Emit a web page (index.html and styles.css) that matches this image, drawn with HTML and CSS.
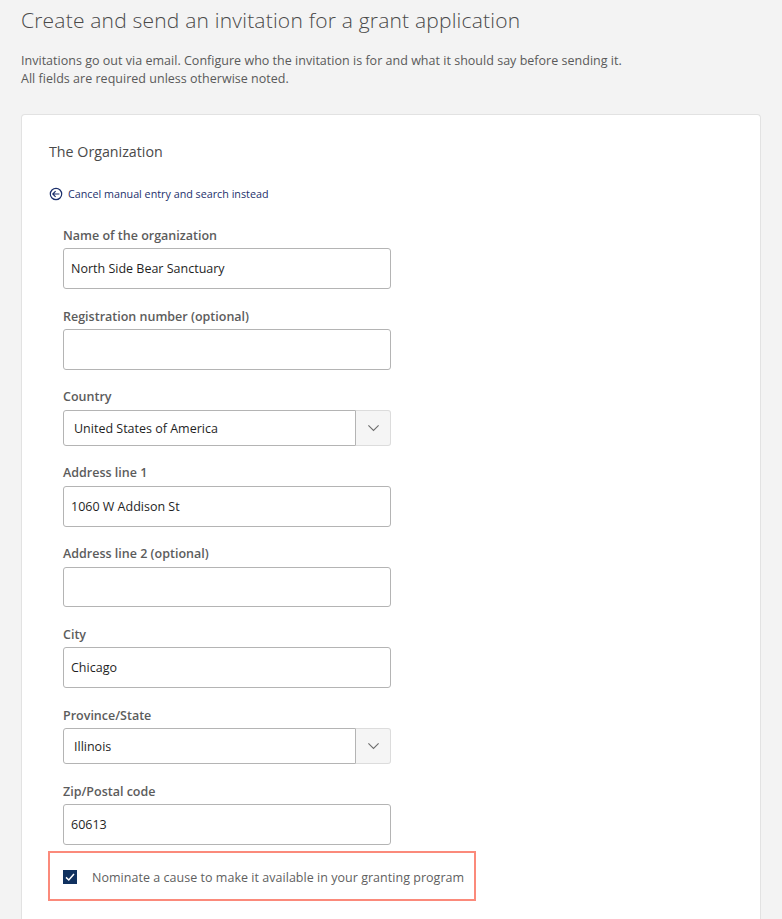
FILE: index.html
```html
<!DOCTYPE html>
<html lang="en">
<head>
<meta charset="utf-8">
<title>Create and send an invitation</title>
<link rel="stylesheet" href="styles.css">
</head>
<body>
<main class="page">
  <h1 class="title">Create and send an invitation for a grant application</h1>
  <p class="intro">Invitations go out via email. Configure who the invitation is for and what it should say before sending it.<br>All fields are required unless otherwise noted.</p>
  <section class="card">
    <h2 class="card-title">The Organization</h2>
    <a class="back-link" href="#">
      <svg class="back-icon" viewBox="0 0 14 14" aria-hidden="true"><circle cx="7" cy="7" r="5.7"/><path d="M10.4 7H4M6.6 4.2 3.8 7l2.8 2.8"/></svg>
      <span>Cancel manual entry and search instead</span>
    </a>
    <div class="fields">
      <div class="field"><label class="label">Name of the organization</label><div class="input">North Side Bear Sanctuary</div></div>
      <div class="field"><label class="label">Registration number (optional)</label><div class="input"></div></div>
      <div class="field"><label class="label">Country</label>
        <div class="select"><div class="select-value">United States of America</div><div class="select-btn"><svg class="chevron" viewBox="0 0 14 8" aria-hidden="true"><path d="M1.5 1.2 7 6.6l5.5-5.4"/></svg></div></div></div>
      <div class="field"><label class="label">Address line 1</label><div class="input">1060 W Addison St</div></div>
      <div class="field"><label class="label">Address line 2 (optional)</label><div class="input"></div></div>
      <div class="field"><label class="label">City</label><div class="input">Chicago</div></div>
      <div class="field"><label class="label">Province/State</label>
        <div class="select"><div class="select-value">Illinois</div><div class="select-btn"><svg class="chevron" viewBox="0 0 14 8" aria-hidden="true"><path d="M1.5 1.2 7 6.6l5.5-5.4"/></svg></div></div></div>
      <div class="field"><label class="label">Zip/Postal code</label><div class="input">60613</div></div>
    </div>
    <div class="nominate">
      <span class="checkbox"><svg viewBox="0 0 14 14" aria-hidden="true"><path d="M3 7.4 5.8 10 11 4"/></svg></span>
      <span class="nominate-text">Nominate a cause to make it available in your granting program</span>
    </div>
  </section>
</main>
</body>
</html>
```

FILE: styles.css
```css
* { box-sizing: border-box; }
html, body { margin: 0; }
body {
  background: #f3f3f3;
  font-family: "Open Sans", "Liberation Sans", sans-serif;
  color: #4f4f4f;
}
.page { padding: 5px 21px 0; }
.title {
  margin: 0;
  font-size: 21px;
  line-height: 30px;
  font-weight: 300;
  letter-spacing: 0.2px;
  color: #4a4a4a;
}
.intro {
  margin: 17px 0 0;
  font-size: 12.5px;
  line-height: 18px;
  letter-spacing: 0.02px;
  color: #5a5a5a;
}
.card {
  margin-top: 26px;
  width: 740px;
  height: 805px;
  background: #fff;
  border: 1px solid #e2e2e2;
  border-bottom: 0;
  border-radius: 4px 4px 0 0;
  padding: 27px 27px 0;
}
.card-title {
  margin: 0;
  font-size: 14.25px;
  line-height: 20px;
  font-weight: 400;
  color: #4a4a4a;
}
.back-link {
  display: flex;
  align-items: center;
  gap: 5px;
  margin-top: 24px;
  font-size: 10.75px;
  line-height: 16px;
  color: #1c2f6b;
  text-decoration: none;
}
.back-icon {
  width: 14px;
  height: 14px;
  fill: none;
  stroke: #1c2f6b;
  stroke-width: 1.2;
}
.fields { margin: 6.3px 0 0 14px; width: 328px; }
.field { padding-top: 18.5px; }
.label {
  display: block;
  margin-bottom: 3.5px;
  font-size: 12.5px;
  line-height: 18px;
  font-weight: 600;
  color: #5c5c5c;
}
.input {
  height: 40.75px;
  border: 1px solid #b4b4b4;
  border-radius: 3px;
  background: #fff;
  padding: 0 7px;
  font-size: 12.5px;
  line-height: 39.75px;
  color: #1f1f1f;
}
.select { display: flex; height: 36px; }
.select-value {
  flex: 1;
  border: 1px solid #b4b4b4;
  border-radius: 3px 0 0 3px;
  padding: 0 10px;
  font-size: 12.5px;
  line-height: 35px;
  color: #1f1f1f;
}
.select-btn {
  width: 35px;
  display: flex;
  align-items: center;
  justify-content: center;
  background: #f5f5f5;
  border: 1px solid #dcdcdc;
  border-left: 0;
  border-radius: 0 3px 3px 0;
}
.chevron {
  width: 13px;
  height: 8px;
  fill: none;
  stroke: #6e6e6e;
  stroke-width: 1.2;
}
.nominate {
  display: flex;
  align-items: center;
  width: 428px;
  height: 50px;
  margin: 6.4px 0 0 -1px;
  padding: 2px 0 0 13px;
  border: 2px solid #fb8a7b;
}
.checkbox {
  width: 14px;
  height: 14px;
  background: #10315f;
  display: flex;
}
.checkbox svg {
  width: 14px;
  height: 14px;
  fill: none;
  stroke: #fff;
  stroke-width: 1.5;
}
.nominate-text {
  margin-left: 15px;
  font-size: 12.5px;
  letter-spacing: 0.03px;
  color: #5f5f5f;
}
```
